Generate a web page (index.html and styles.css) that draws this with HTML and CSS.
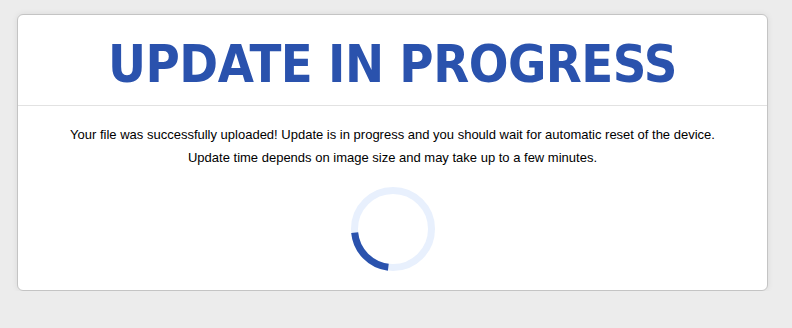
FILE: index.html
```html
<!DOCTYPE html>
<html lang="en">
<head>
<meta charset="utf-8">
<title>Update in progress</title>
<link rel="stylesheet" href="styles.css">
</head>
<body>
<div class="page">
  <div class="card">
    <div class="card-header">
      <h1 class="title">UPDATE IN PROGRESS</h1>
    </div>
    <div class="card-body">
      <p class="message">Your file was successfully uploaded! Update is in progress and you should wait for automatic reset of the device.<br>Update time depends on image size and may take up to a few minutes.</p>
      <div class="spinner">
        <svg width="84" height="84" viewBox="0 0 84 84">
          <circle cx="42" cy="42" r="38.5" fill="none" stroke="#e8f0fd" stroke-width="7"/>
          <circle cx="42" cy="42" r="38.5" fill="none" stroke="#2a52ad" stroke-width="7" stroke-dasharray="52 245" transform="rotate(97 42 42)"/>
        </svg>
      </div>
    </div>
  </div>
</div>
</body>
</html>
```
FILE: styles.css
```css
html, body {
  margin: 0;
  padding: 0;
  background: #ececec;
}
.page {
  padding: 14px 24px 0 17px;
}
.card {
  background: #fff;
  border: 1px solid #c4c4c4;
  border-radius: 6px;
  box-shadow: 0 0 6px rgba(0,0,0,0.08);
}
.card-header {
  height: 90px;
  display: flex;
  align-items: center;
  justify-content: center;
  border-bottom: 1px solid #e2e2e2;
}
.title {
  margin: 0;
  font-family: "DejaVu Sans Condensed", "DejaVu Sans", sans-serif;
  font-weight: bold;
  font-size: 52px;
  letter-spacing: -0.5px;
  line-height: 1;
  color: #2a52ad;
  padding-top: 7px;
}
.card-body {
  padding: 17px 20px 19px;
  display: flex;
  flex-direction: column;
  align-items: center;
}
.message {
  margin: 0;
  font-family: "Liberation Sans", Arial, sans-serif;
  font-size: 13px;
  line-height: 23px;
  color: #000;
  text-align: center;
}
.spinner {
  margin-top: 18px;
  width: 84px;
  height: 84px;
}
.spinner svg {
  display: block;
}
```
